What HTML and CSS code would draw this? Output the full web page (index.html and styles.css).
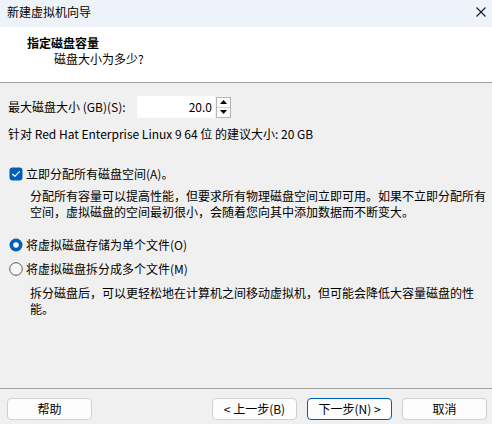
FILE: index.html
```html
<!DOCTYPE html>
<html lang="zh-CN">
<head>
<meta charset="utf-8">
<title>新建虚拟机向导</title>
<link rel="stylesheet" href="styles.css">
</head>
<body>
<div class="window">
  <div class="titlebar">
    <span class="title-text">新建虚拟机向导</span>
    <svg class="close" width="10" height="10" viewBox="0 0 10 10"><path d="M0.5 0.5 L9.5 9.5 M9.5 0.5 L0.5 9.5" stroke="#1a1a1a" stroke-width="1.1" fill="none"/></svg>
  </div>
  <div class="header">
    <div class="header-title">指定磁盘容量</div>
    <div class="header-sub">磁盘大小为多少?</div>
  </div>
  <div class="main">
    <div class="size-row">
      <span class="size-label">最大磁盘大小 (GB)(S):</span>
      <div class="spin">
        <div class="spin-input">20.0</div>
        <div class="spin-buttons">
          <div class="spin-btn"><svg width="7" height="4" viewBox="0 0 7 4"><path d="M0 4 L3.5 0 L7 4 Z" fill="#000"/></svg></div>
          <div class="spin-btn"><svg width="7" height="4" viewBox="0 0 7 4"><path d="M0 0 L3.5 4 L7 0 Z" fill="#000"/></svg></div>
        </div>
      </div>
    </div>
    <div class="hint">针对 Red Hat Enterprise Linux 9 64 位 的建议大小: 20 GB</div>

    <div class="option check-row">
      <svg class="box" width="14" height="14" viewBox="0 0 14 14"><rect x="0.5" y="0.5" width="13" height="13" rx="3" fill="#005fb8"/><path d="M3.6 7.2 L5.9 9.4 L10.4 4.6" stroke="#fff" stroke-width="1.2" fill="none" stroke-linecap="round" stroke-linejoin="round"/></svg>
      <span>立即分配所有磁盘空间(A)。</span>
    </div>
    <div class="desc">分配所有容量可以提高性能，但要求所有物理磁盘空间立即可用。如果不立即分配所有<br>空间，虚拟磁盘的空间最初很小，会随着您向其中添加数据而不断变大。</div>

    <div class="radios">
      <div class="option">
        <svg class="box" width="14" height="14" viewBox="0 0 14 14"><circle cx="7" cy="7" r="6.5" fill="#005fb8"/><circle cx="7" cy="7" r="2.8" fill="#fff"/></svg>
        <span>将虚拟磁盘存储为单个文件(O)</span>
      </div>
      <div class="option">
        <svg class="box" width="14" height="14" viewBox="0 0 14 14"><circle cx="7" cy="7" r="6.3" fill="#f6f6f6" stroke="#5c5c5c" stroke-width="1"/></svg>
        <span>将虚拟磁盘拆分成多个文件(M)</span>
      </div>
    </div>
    <div class="desc desc-split">拆分磁盘后，可以更轻松地在计算机之间移动虚拟机，但可能会降低大容量磁盘的性<br>能。</div>
  </div>
  <div class="footer">
    <button class="btn">帮助</button>
    <div class="btn-group">
      <button class="btn">&lt; 上一步(B)</button>
      <button class="btn btn-default">下一步(N) &gt;</button>
      <button class="btn">取消</button>
    </div>
  </div>
</div>
</body>
</html>
```
FILE: styles.css
```css
html, body {
  margin: 0;
  padding: 0;
}
body {
  width: 492px;
  height: 424px;
  overflow: hidden;
  font-family: "Segoe UI", "Noto Sans CJK SC", sans-serif;
  font-size: 12px;
  color: #000;
  background: #f0f0f0;
}
.window {
  display: flex;
  flex-direction: column;
  height: 424px;
}
.titlebar {
  height: 27px;
  flex: 0 0 27px;
  background: #eef3fa;
  display: flex;
  align-items: center;
  justify-content: space-between;
  padding: 0 6px 3px 7px;
  box-sizing: border-box;
  line-height: 16px;
}
.close {
  display: block;
}
.header {
  height: 56px;
  flex: 0 0 56px;
  background: #fff;
  border-bottom: 1px solid #a0a0a0;
  box-sizing: border-box;
  padding: 8px 0 0 27px;
  line-height: 16px;
}
.header-title {
  font-weight: bold;
}
.header-sub {
  padding-left: 27px;
}
.main {
  flex: 1;
  padding: 13px 8px 0 8px;
  line-height: 16px;
}
.size-row {
  display: flex;
  align-items: center;
  height: 22px;
}
.size-label {
  flex: 0 0 129px;
}
.spin {
  display: flex;
  align-items: center;
}
.spin-input {
  width: 78px;
  height: 22px;
  background: #fff;
  box-sizing: border-box;
  text-align: right;
  padding-right: 3px;
  line-height: 22px;
}
.spin-buttons {
  margin-left: 1px;
  width: 15px;
  height: 21px;
  display: flex;
  flex-direction: column;
  border: 1px solid #b4b4b4;
  box-sizing: border-box;
  background: #fbfbfb;
}
.spin-btn {
  flex: 1;
  display: flex;
  align-items: center;
  justify-content: center;
}
.spin-btn + .spin-btn {
  border-top: 1px solid #d4d4d4;
}
.hint {
  margin-top: 8px;
}
.option {
  display: flex;
  align-items: center;
  gap: 3px;
  padding-left: 1px;
  height: 16px;
}
.box {
  display: block;
  flex: 0 0 14px;
}
.check-row {
  margin-top: 24px;
}
.desc {
  padding-left: 22px;
  margin-top: 6px;
  white-space: nowrap;
}
.radios {
  margin-top: 17px;
  display: flex;
  flex-direction: column;
  gap: 8px;
}
.desc-split {
  margin-top: 8px;
}
.footer {
  flex: 0 0 36px;
  border-top: 1px solid #a0a0a0;
  box-sizing: border-box;
  display: flex;
  justify-content: space-between;
  padding: 9px 5px 0 7px;
}
.btn-group {
  display: flex;
  gap: 10px;
}
.btn {
  width: 85px;
  height: 22px;
  font-family: inherit;
  font-size: 12px;
  color: #000;
  background: #fdfdfd;
  border: 1px solid #d0d0d0;
  border-radius: 4px;
  padding: 0;
  line-height: 18px;
}
.btn-default {
  border-color: #005fb8;
}
```
